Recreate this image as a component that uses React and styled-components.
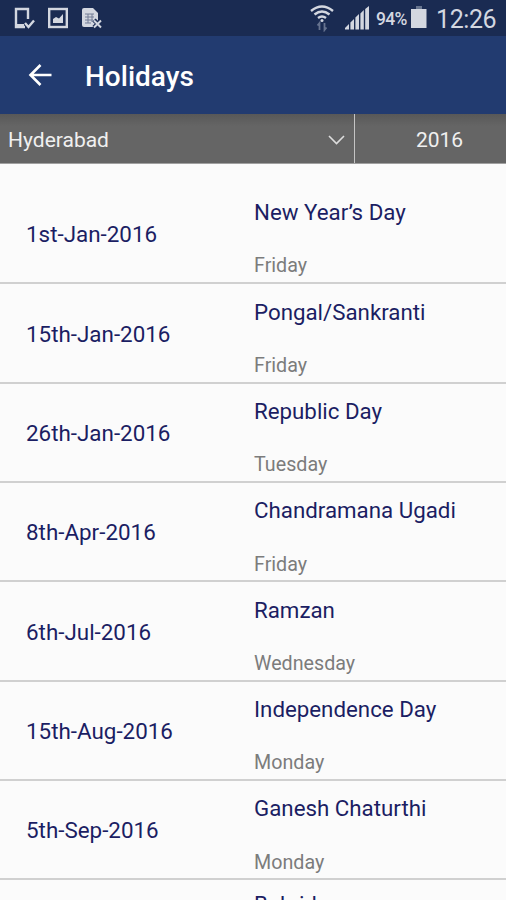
import React from 'react';
import styled, { createGlobalStyle } from 'styled-components';

const GlobalStyle = createGlobalStyle`
  * {
    box-sizing: border-box;
  }

  body {
    margin: 0;
    font-family: Roboto, sans-serif;
    background-color: #fbfbfb;
  }
`;

const Screen = styled.div`
  display: flex;
  flex-direction: column;
  width: 506px;
  height: 900px;
  overflow: hidden;
  background-color: #fbfbfb;
`;

const StatusBar = styled.div`
  display: flex;
  justify-content: space-between;
  flex: none;
  height: 36px;
  padding: 0 9px 0 14px;
  background-color: #1a2b52;
  color: #d3d7e0;
`;

const StatusGroup = styled.div`
  display: flex;
  align-items: center;
`;

const StatusIcon = styled.svg`
  display: block;
  flex: none;
  margin-right: ${props => props.$gap || 0}px;
`;

const Battery = styled.span`
  width: 33px;
  margin-right: 2px;
  padding-top: 2px;
  font-size: 17.5px;
  font-weight: 500;
  letter-spacing: -0.7px;
  white-space: nowrap;
`;

const Clock = styled.span`
  width: 61px;
  padding-top: 3px;
  font-size: 25px;
  line-height: 30px;
  letter-spacing: -0.4px;
  white-space: nowrap;
`;

const AppBar = styled.header`
  display: flex;
  align-items: center;
  flex: none;
  height: 78px;
  padding-left: 28px;
  background-color: #223b70;
  color: #ffffff;
`;

const BackButton = styled.button`
  display: flex;
  width: 57px;
  padding: 0;
  border: 0;
  background: none;
  color: inherit;
`;

const Title = styled.h1`
  margin: 4px 0 0;
  font-size: 28px;
  font-weight: 500;
  line-height: 34px;
`;

const FilterBar = styled.div`
  display: flex;
  flex: none;
  height: 50px;
  border-bottom: 1px solid #a0a0a0;
  background: linear-gradient(#585858, #656565 12px);
  color: #f0f0f0;
  font-size: 21px;
`;

const CityFilter = styled.div`
  display: flex;
  align-items: center;
  justify-content: space-between;
  width: 355px;
  padding: 3px 9px 0 8px;
  border-right: 1px solid #c4c4c4;
`;

const YearFilter = styled.div`
  display: flex;
  flex: 1;
  align-items: center;
  justify-content: center;
  padding: 3px 0 0 18px;
`;

const HolidayList = styled.div`
  padding-top: 21px;
`;

const HolidayRow = styled.div`
  display: grid;
  grid-template-columns: 228px 1fr;
  height: 99.35px;
  padding-left: 26px;
  border-bottom: 2px solid #d0d0d0;
  color: #1b1e63;
`;

const HolidayDate = styled.div`
  padding-top: 34.3px;
  font-size: 22.4px;
  line-height: 30px;
`;

const HolidayInfo = styled.div`
  display: flex;
  flex-direction: column;
  padding-top: ${props => (props.$compact ? 8.5 : 12.2)}px;
  white-space: nowrap;
`;

const HolidayName = styled.div`
  font-size: 22.3px;
  line-height: 30px;
`;

const HolidayDay = styled.div`
  margin-top: 27.3px;
  color: #7c7c7c;
  font-size: 19.7px;
  line-height: 24px;
`;

const holidays = [
  { date: '1st-Jan-2016', name: 'New Year’s Day', day: 'Friday' },
  { date: '15th-Jan-2016', name: 'Pongal/Sankranti', day: 'Friday' },
  { date: '26th-Jan-2016', name: 'Republic Day', day: 'Tuesday' },
  { date: '8th-Apr-2016', name: 'Chandramana Ugadi', day: 'Friday' },
  { date: '6th-Jul-2016', name: 'Ramzan', day: 'Wednesday' },
  { date: '15th-Aug-2016', name: 'Independence Day', day: 'Monday' },
  { date: '5th-Sep-2016', name: 'Ganesh Chaturthi', day: 'Monday' },
  { date: '', name: 'Bakrid', day: '' }
];

const PhoneCheckIcon = () => (
  <StatusIcon $gap={13} width="21" height="24" viewBox="0 0 21 24" fill="none" stroke="currentColor">
    <path d="M14 13V3H2v18h9" strokeWidth="2.4" />
    <path d="M2 18h8v3H2z" fill="currentColor" stroke="none" />
    <path d="M11 17l3.5 4L20 14.5" strokeWidth="2.4" />
  </StatusIcon>
);

const ImageIcon = () => (
  <StatusIcon $gap={14} width="20" height="24" viewBox="0 0 20 24" fill="none">
    <rect x="1.2" y="3" width="17.6" height="18" stroke="currentColor" strokeWidth="2.4" />
    <path d="M5 17v-4l3-2 3 1.5L15 8v9z" fill="currentColor" />
  </StatusIcon>
);

const FileErrorIcon = () => (
  <StatusIcon width="21" height="24" viewBox="0 0 21 24" fill="none">
    <path d="M0 4q0-2 2-2h9l5 5v14H2q-2 0-2-2z" fill="currentColor" />
    <path d="M3 8h9M3 11h9M3 14h8M3 17h6M6 8v9M10 8v8" stroke="#737d96" />
    <path d="M12 14l7.5 7.5M19.5 14L12 21.5" stroke="#1a2b52" strokeWidth="4.5" />
    <path d="M12 14.5l7 7M19 14.5l-7 7" stroke="currentColor" strokeWidth="2" />
  </StatusIcon>
);

const WifiIcon = () => (
  <StatusIcon $gap={11} width="24" height="28" viewBox="0 0 24 28" fill="none" stroke="currentColor" strokeWidth="2.4">
    <path d="M1 7Q12-2 23 7M4.5 10.5q7.5-6 15 0M8 14q4-3 8 0" />
    <circle cx="12" cy="16.5" r="1.5" fill="currentColor" stroke="none" />
    <path d="M9.5 26v-7l-2 2.5M14.5 19v7l2-2.5" stroke="#66738f" strokeWidth="1.8" />
  </StatusIcon>
);

const SignalIcon = () => (
  <StatusIcon $gap={7} width="24" height="24" viewBox="0 0 24 24" fill="currentColor">
    <path d="M0 23.5V22l4-4v5.5zM5.4 23.5v-7L9 13v10.5zM10.4 23.5v-12L14 8v15.5zM15.4 23.5v-16L18.8 4v19.5zM20.2 23.5V3l3.8-3v23.5z" />
  </StatusIcon>
);

const BatteryIcon = () => (
  <StatusIcon $gap={9} width="16" height="24" viewBox="0 0 16 24">
    <path d="M5 0h6v3H5z" fill="#67758f" />
    <path d="M0 3h15.5v19H0z" fill="currentColor" />
  </StatusIcon>
);

const App = () => {
  return (
    <>
      <GlobalStyle />
      <Screen>
        <StatusBar>
          <StatusGroup>
            <PhoneCheckIcon />
            <ImageIcon />
            <FileErrorIcon />
          </StatusGroup>
          <StatusGroup>
            <WifiIcon />
            <SignalIcon />
            <Battery>94%</Battery>
            <BatteryIcon />
            <Clock>12:26</Clock>
          </StatusGroup>
        </StatusBar>

        <AppBar>
          <BackButton aria-label="Back">
            <svg width="24" height="24" viewBox="0 0 24 24" fill="none" stroke="currentColor" strokeWidth="2.6">
              <path d="M23.5 12H3M12.5 2L2.5 12l10 10" />
            </svg>
          </BackButton>
          <Title>Holidays</Title>
        </AppBar>

        <FilterBar>
          <CityFilter>
            Hyderabad
            <svg width="17" height="11" viewBox="0 0 17 11" fill="none" stroke="#dddddd" strokeWidth="1.6">
              <path d="M1 1l7.5 7.5L16 1" />
            </svg>
          </CityFilter>
          <YearFilter>2016</YearFilter>
        </FilterBar>

        <HolidayList>
          {holidays.map(holiday => (
            <HolidayRow key={holiday.name}>
              <HolidayDate>{holiday.date}</HolidayDate>
              <HolidayInfo $compact={!holiday.day}>
                <HolidayName>{holiday.name}</HolidayName>
                <HolidayDay>{holiday.day}</HolidayDay>
              </HolidayInfo>
            </HolidayRow>
          ))}
        </HolidayList>
      </Screen>
    </>
  );
};

export default App;
